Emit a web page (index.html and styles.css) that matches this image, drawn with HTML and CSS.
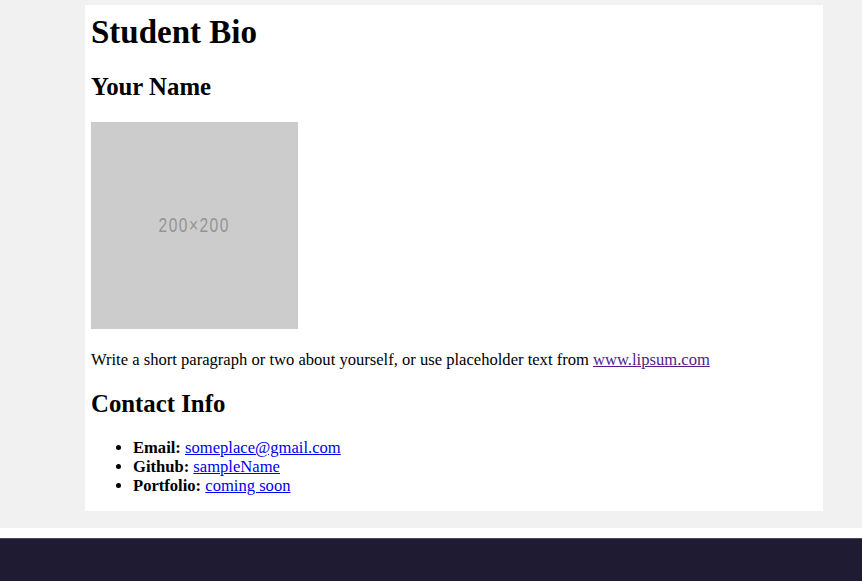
FILE: index.html
```html
<!DOCTYPE html>
<html lang="en">
<head>
<meta charset="utf-8">
<title>Student Bio</title>
<link rel="stylesheet" href="styles.css">
</head>
<body>
<div class="page">
  <main class="card">
    <h1 class="title">Student Bio</h1>
    <h2 class="subtitle">Your Name</h2>
    <div class="photo"><span class="photo-label">200×200</span></div>
    <p class="bio">Write a short paragraph or two about yourself, or use placeholder text from <a class="visited" href="#">www.lipsum.com</a></p>
    <h2 class="subtitle contact">Contact Info</h2>
    <ul class="contact-list">
      <li><b>Email:</b> <a href="#">someplace@gmail.com</a></li>
      <li><b>Github:</b> <a href="#">sampleName</a></li>
      <li><b>Portfolio:</b> <a href="#">coming soon</a></li>
    </ul>
  </main>
</div>
<div class="spacer"></div>
<footer class="footer"></footer>
</body>
</html>
```
FILE: styles.css
```css
html, body {
  margin: 0;
  padding: 0;
  background: #ffffff;
}
body {
  font-family: "Liberation Serif", "Times New Roman", serif;
  font-size: 16.58px;
  line-height: 19px;
  color: #000;
}
.page {
  background: #f1f1f1;
  padding: 5px 0 17px;
}
.card {
  background: #ffffff;
  margin: 0 39px 0 85px;
  padding: 8px 6px 16px;
}
.title {
  font-size: 33px;
  line-height: 38px;
  font-weight: bold;
  margin: 0 0 22px;
}
.subtitle {
  font-size: 24.8px;
  line-height: 28px;
  font-weight: bold;
  margin: 0 0 21px;
}
.contact {
  margin-bottom: 20px;
}
.photo {
  width: 207px;
  height: 207px;
  background: #cccccc;
  display: flex;
  align-items: center;
  justify-content: center;
}
.photo-label {
  display: inline-block;
  font-family: "Liberation Sans", Arial, sans-serif;
  font-size: 21px;
  line-height: 21px;
  letter-spacing: 2px;
  color: #949494;
  transform: scaleX(0.74);
  margin-top: -2px;
}
.bio {
  margin: 21px 0 21px;
}
a {
  color: #0000ee;
}
a.visited {
  color: #551a8b;
}
.contact-list {
  margin: 0;
  padding-left: 42px;
}
.spacer {
  height: 10px;
  background: #ffffff;
}
.footer {
  background: #1e1b33;
  border-top: 1px solid #4a4760;
  height: 60px;
}
```
